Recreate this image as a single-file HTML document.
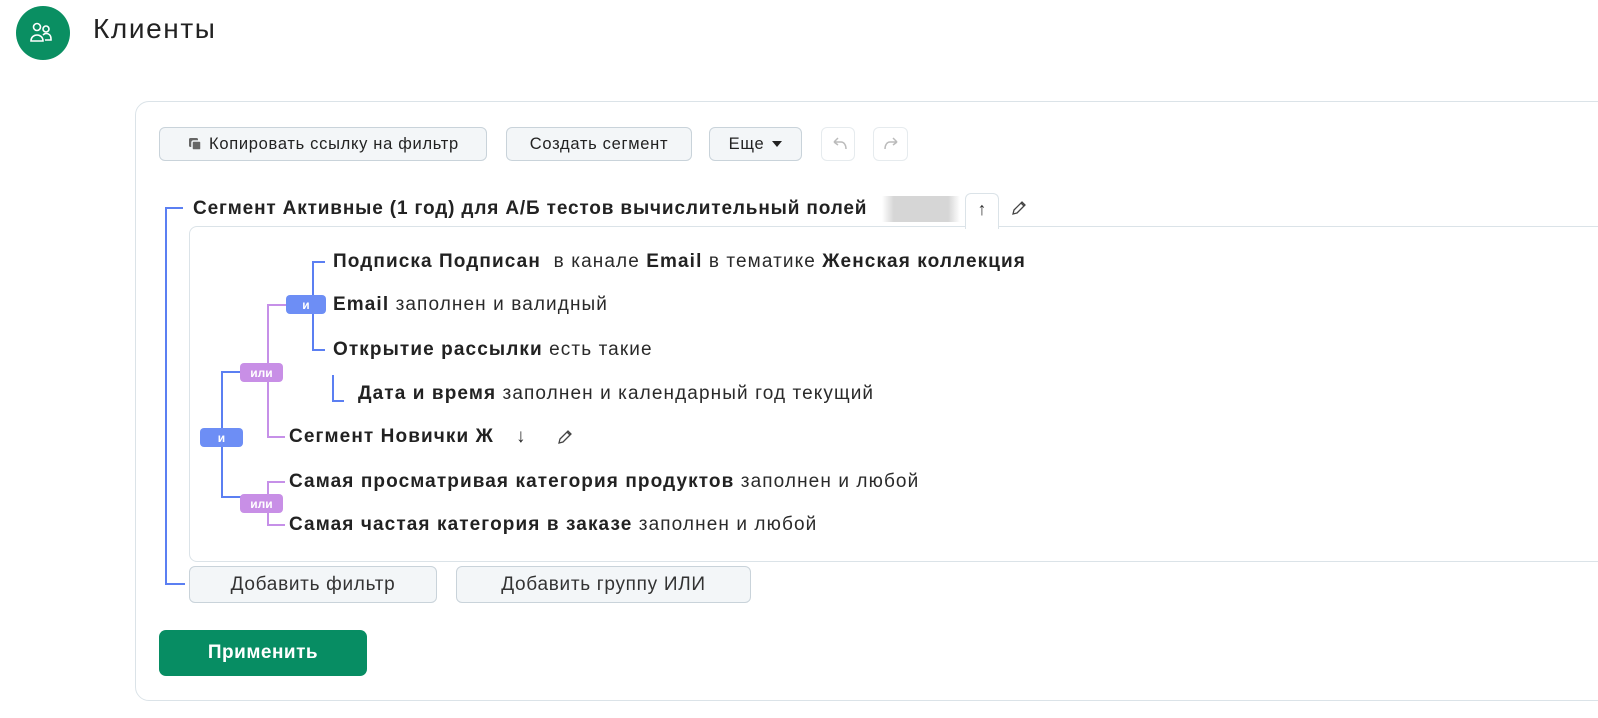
<!DOCTYPE html>
<html><head><meta charset="utf-8"><style>
*{box-sizing:border-box;margin:0;padding:0}
body{width:1598px;height:718px;background:#fff;position:relative;overflow:hidden;font-family:"Liberation Sans","DejaVu Sans",sans-serif;color:#222}
.a{position:absolute}
.btn{position:absolute;background:#f3f6f8;border:1px solid #c9d3da;border-radius:6px;font-size:16.5px;letter-spacing:0.7px;color:#222;display:flex;align-items:center;justify-content:center;white-space:nowrap}
.row{position:absolute;font-size:19px;letter-spacing:1.1px;white-space:nowrap;color:#2a2a2a;line-height:20px}
.row b{font-weight:bold;color:#222}
.bd{position:absolute;color:#fff;font-size:12px;font-weight:bold;border-radius:4px;display:flex;align-items:center;justify-content:center;height:19px}
.blue{background:#6d8ef5}.pur{background:#c88fe6}
.lb{position:absolute;background:#5b7ff2}
.lp{position:absolute;background:#c690e8}
</style></head><body>
<div class="a" style="left:16px;top:6px;width:54px;height:54px;border-radius:50%;background:#0a8f62"></div>
<svg class="a" style="left:29px;top:21px" width="26" height="24" viewBox="0 0 26 24" fill="none" stroke="#fff" stroke-width="1.6"><circle cx="8" cy="6" r="3.5"/><circle cx="17" cy="8" r="3"/><path d="M2 20c0-4 3-6 6-6s6 2 6 6z"/><path d="M14 14c1-1 2-1.5 3-1.5 3 0 5 2 5 5.5v1h-6"/></svg>
<div class="a" style="left:93px;top:13px;font-size:28px;letter-spacing:1.6px;color:#222">Клиенты</div>

<div class="a" style="left:135px;top:101px;width:1500px;height:600px;border:1px solid #dbe3e8;border-radius:14px"></div>

<div class="btn" style="left:159px;top:127px;width:328px;height:34px"><svg width="16" height="16" viewBox="0 0 16 16" style="margin-right:6px"><rect x="2" y="2" width="9" height="9" rx="1.5" fill="#666"/><rect x="5" y="5" width="9" height="9" rx="1.5" fill="#666" stroke="#f3f6f8" stroke-width="1.5"/></svg>Копировать ссылку на фильтр</div>
<div class="btn" style="left:506px;top:127px;width:186px;height:34px">Создать сегмент</div>
<div class="btn" style="left:709px;top:127px;width:93px;height:34px">Еще <span style="display:inline-block;margin-left:8px;border-left:5px solid transparent;border-right:5px solid transparent;border-top:6px solid #222"></span></div>
<div class="a" style="left:821px;top:127px;width:34px;height:34px;border:1px solid #e6ebee;border-radius:6px"><svg width="34" height="34" viewBox="0 0 34 34" fill="none" stroke="#bbb" stroke-width="1.5"><path d="M12 14l4-4M12 14l4 3M12 14h7c3 0 5 3 5 7"/></svg></div>
<div class="a" style="left:873px;top:127px;width:35px;height:34px;border:1px solid #e6ebee;border-radius:6px"><svg width="34" height="34" viewBox="0 0 34 34" fill="none" stroke="#bbb" stroke-width="1.5"><path d="M23 14l-4-4M23 14l-4 3M23 14h-7c-3 0-5 3-5 7"/></svg></div>

<div class="lb" style="left:165px;top:207px;width:2px;height:378px"></div>
<div class="lb" style="left:165px;top:207px;width:18px;height:2px"></div>
<div class="lb" style="left:165px;top:583px;width:20px;height:2px"></div>
<div class="row" style="left:193px;top:199px;letter-spacing:0.85px"><b>Сегмент Активные (1 год) для А/Б тестов вычислительный полей</b></div>
<div class="a" style="left:882px;top:196px;width:78px;height:26px;background:linear-gradient(90deg,#fff,#d6d6d6 15%,#d6d6d6 85%,#fff)"></div>

<div class="a" style="left:189px;top:226px;width:1450px;height:336px;border:1px solid #dbe3e8;border-radius:8px"></div>
<div class="a" style="left:965px;top:193px;width:34px;height:36px;border:1px solid #dbe3e8;border-bottom:none;border-radius:6px 6px 0 0;background:#fff;text-align:center;font-size:18px;line-height:30px;color:#333">↑</div>
<svg class="a" style="left:1010px;top:199px" width="18" height="18" viewBox="0 0 18 18" fill="none" stroke="#444" stroke-width="1.3"><path d="M3 15l1-4 8-8 3 3-8 8z M11 4l3 3"/></svg>

<div class="row" style="left:333px;top:252px"><b>Подписка Подписан</b>&nbsp; в канале <b>Email</b> в тематике <b>Женская коллекция</b></div>
<div class="row" style="left:333px;top:295px"><b>Email</b> заполнен и валидный</div>
<div class="row" style="left:333px;top:340px"><b>Открытие рассылки</b> есть такие</div>
<div class="row" style="left:358px;top:384px"><b>Дата и время</b> заполнен и календарный год текущий</div>
<div class="row" style="left:289px;top:427px"><b>Сегмент Новички Ж</b></div>
<div class="row" style="left:516px;top:427px">↓</div>
<svg class="a" style="left:556px;top:428px" width="18" height="18" viewBox="0 0 18 18" fill="none" stroke="#444" stroke-width="1.3"><path d="M3 15l1-4 8-8 3 3-8 8z M11 4l3 3"/></svg>
<div class="row" style="left:289px;top:472px"><b>Самая просматривая категория продуктов</b> заполнен и любой</div>
<div class="row" style="left:289px;top:515px"><b>Самая частая категория в заказе</b> заполнен и любой</div>

<div class="lb" style="left:312px;top:261px;width:2px;height:90px"></div>
<div class="lb" style="left:312px;top:261px;width:13px;height:2px"></div>
<div class="lb" style="left:312px;top:349px;width:13px;height:2px"></div>
<div class="lb" style="left:332px;top:375px;width:2px;height:27px"></div>
<div class="lb" style="left:332px;top:400px;width:12px;height:2px"></div>
<div class="lp" style="left:267px;top:304px;width:2px;height:134px"></div>
<div class="lp" style="left:267px;top:304px;width:20px;height:2px"></div>
<div class="lp" style="left:267px;top:436px;width:18px;height:2px"></div>
<div class="lb" style="left:221px;top:371px;width:2px;height:127px"></div>
<div class="lb" style="left:221px;top:371px;width:20px;height:2px"></div>
<div class="lb" style="left:221px;top:496px;width:20px;height:2px"></div>
<div class="lp" style="left:267px;top:481px;width:2px;height:45px"></div>
<div class="lp" style="left:267px;top:481px;width:18px;height:2px"></div>
<div class="lp" style="left:267px;top:524px;width:18px;height:2px"></div>

<div class="bd blue" style="left:286px;top:295px;width:40px">и</div>
<div class="bd pur" style="left:240px;top:363px;width:43px">или</div>
<div class="bd blue" style="left:200px;top:428px;width:43px">и</div>
<div class="bd pur" style="left:240px;top:494px;width:43px">или</div>

<div class="btn" style="left:189px;top:566px;width:248px;height:37px;font-size:19px;letter-spacing:0.7px;color:#333">Добавить фильтр</div>
<div class="btn" style="left:456px;top:566px;width:295px;height:37px;font-size:19px;letter-spacing:0.7px;color:#333">Добавить группу ИЛИ</div>
<div class="a" style="left:159px;top:630px;width:208px;height:46px;background:#078d63;border-radius:7px;color:#fff;font-size:19px;letter-spacing:0.5px;font-weight:bold;display:flex;align-items:center;justify-content:center">Применить</div>
</body></html>
